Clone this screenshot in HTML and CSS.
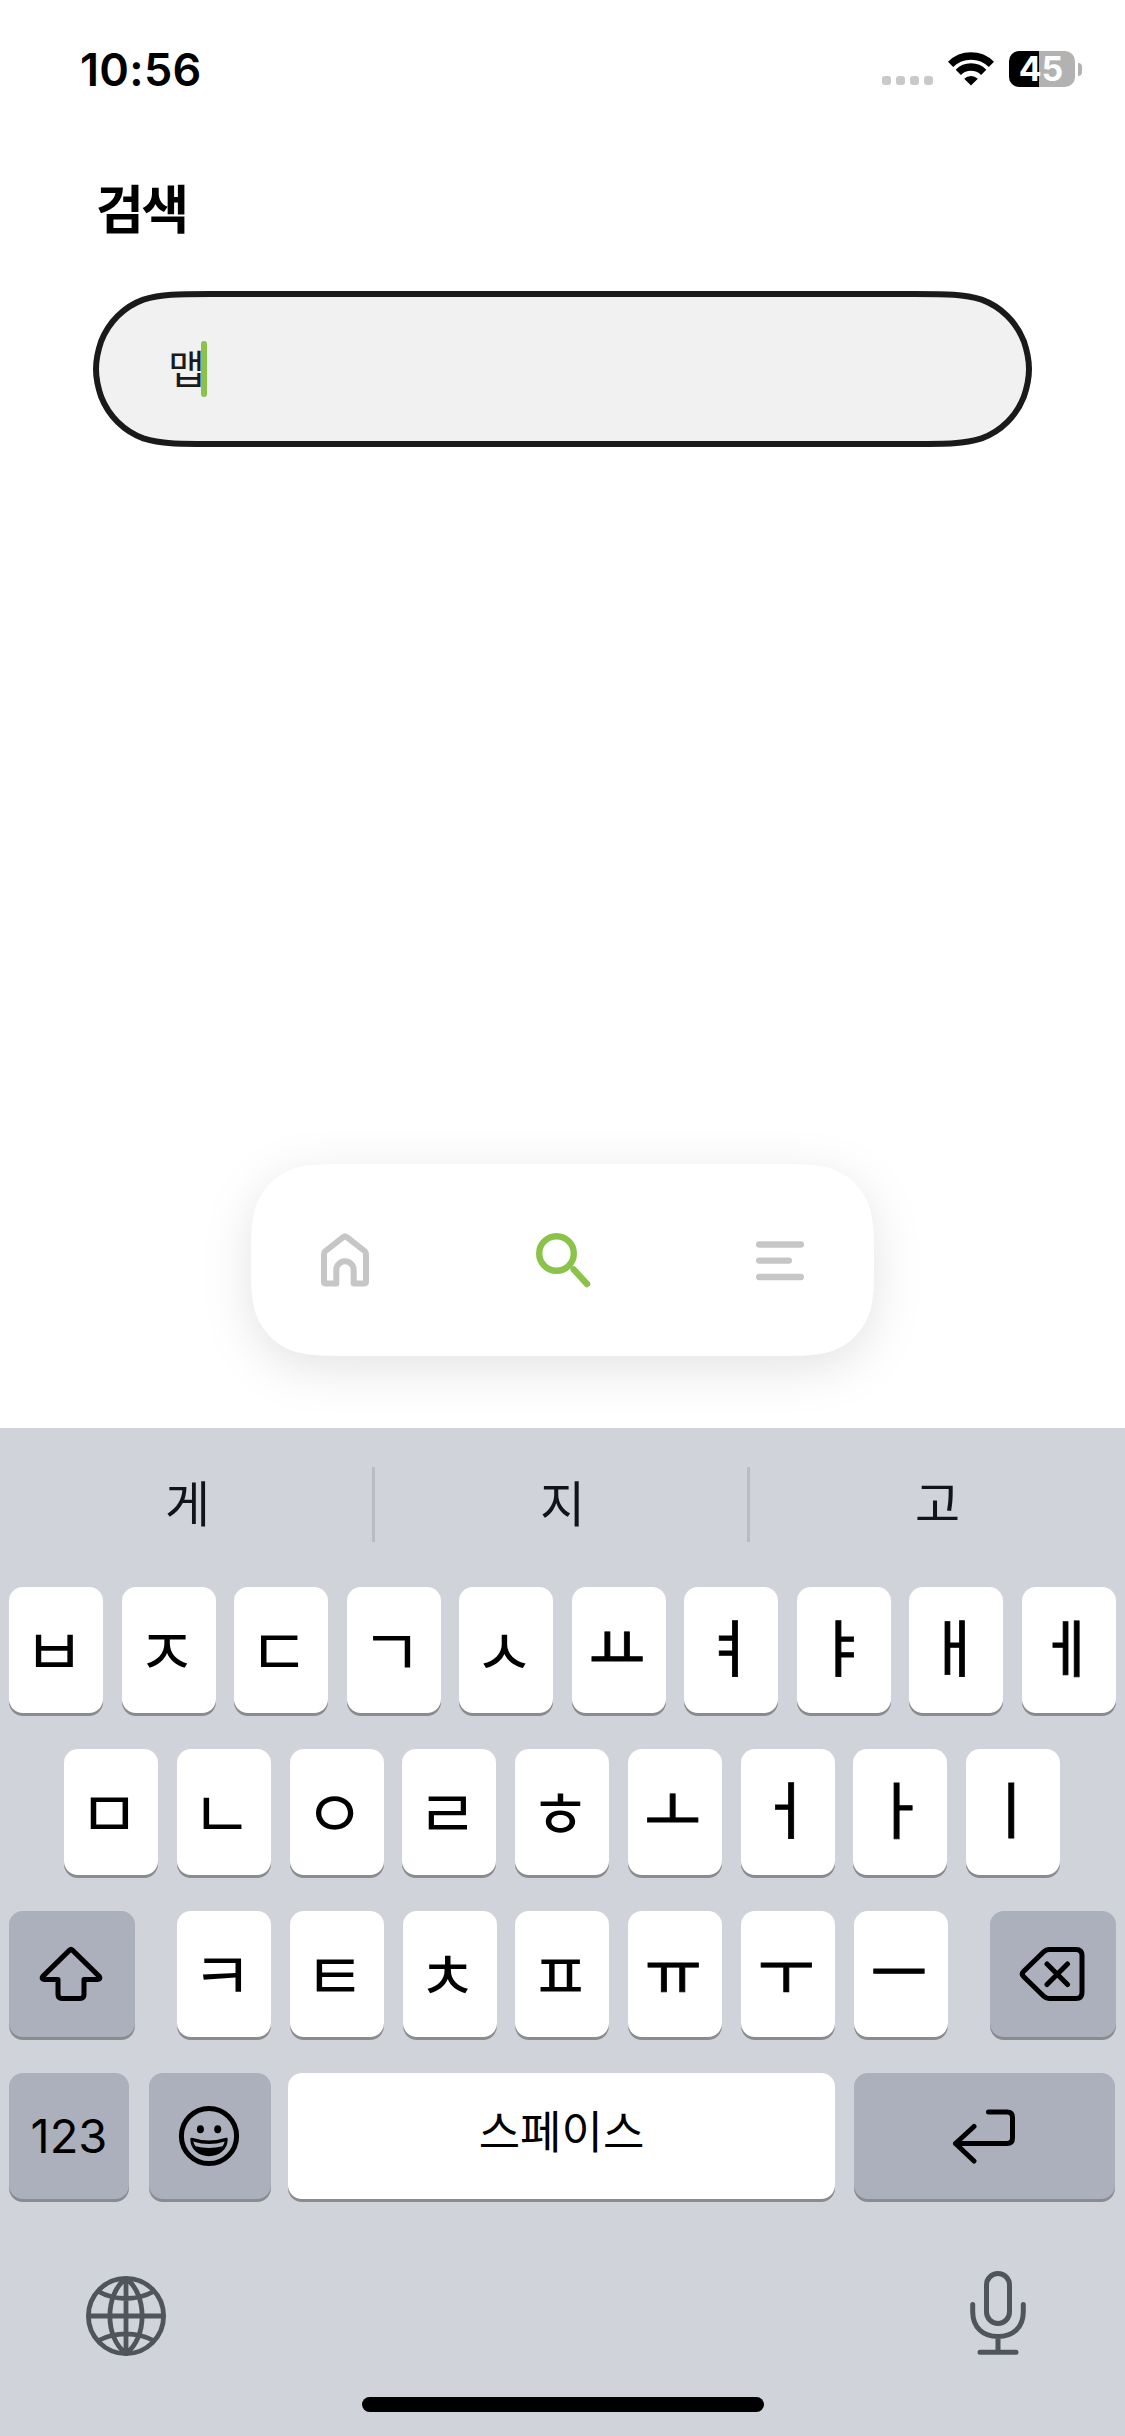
FILE: index.html
```html
<!DOCTYPE html>
<html lang="ko">
<head>
<meta charset="utf-8">
<title>검색</title>
<link rel="stylesheet" href="styles.css">
</head>
<body>
<header class="status">
  <span class="clock">10:56</span>
  <div class="signals">
    <div class="cell"><i></i><i></i><i></i><i></i></div>
    <svg class="wifi" width="46" height="34" viewBox="0 0 46 34">
      <g fill="none" stroke="#000" stroke-width="7.4">
        <path d="M2.6 12.4A29 29 0 0 1 43.4 12.4"/>
        <path d="M10.3 20.3A18 18 0 0 1 35.7 20.3"/>
      </g>
      <path d="M23 33.6L16.2 26.8A9.6 9.6 0 0 1 29.8 26.8Z"/>
    </svg>
    <div class="battery"><span class="level">45</span><i class="nub"></i></div>
  </div>
</header>

<main class="page">
  <h1 class="title">검색</h1>
  <div class="field">
    <svg class="field-shape" width="939" height="156" viewBox="0 0 939 156">
      <path d="M117.65 3H821.35C854.36 3 870.87 3 888.64 8.62C908.04 15.68 923.32 30.96 930.9 50.36C934 59.5 936 67 936 78C936 89 934 96.5 930.9 105.64C923.32 125.04 908.04 140.32 888.64 147.38C870.87 153 854.36 153 821.35 153H117.65C84.64 153 68.13 153 50.36 147.38C30.96 140.32 15.68 125.04 8.1 105.64C5 96.5 3 89 3 78C3 67 5 59.5 8.1 50.36C15.68 30.96 30.96 15.68 50.36 8.62C68.13 3 84.64 3 117.65 3Z" fill="#f1f1f1" stroke="#1a1a1a" stroke-width="6"/>
    </svg>
    <span class="query">맵</span><i class="caret"></i>
  </div>
</main>

<div class="dock">
  <nav class="tabs">
    <svg width="50" height="56" viewBox="0 0 50 56" fill="none" stroke="#c6c6c6" stroke-width="6" stroke-linejoin="round"><path d="M23.2 5.2Q25 3.7 26.8 5.2L44.5 19Q46 20.3 46 22V49.5Q46 51.5 44 51.5H33.7V38A8.7 8.7 0 0 0 16.3 38V51.5H6Q4 51.5 4 49.5V22Q4 20.3 5.5 19Z"/></svg>
    <svg width="56" height="56" viewBox="0 0 56 56" fill="none" stroke="#8bc34a" stroke-width="6.4"><circle cx="21.5" cy="21.5" r="17.3"/><path d="M38.6 37.3L52 52" stroke-linecap="round"/></svg>
    <svg width="50" height="56" viewBox="0 0 50 56" fill="none" stroke="#c6c6c6" stroke-width="6.4" stroke-linecap="round"><path d="M4.2 12.5H45.8M4.2 28.6H33.8M4.2 45H45.8"/></svg>
  </nav>
</div>

<section class="keyboard">
  <div class="suggestions"><span>게</span><span>지</span><span>고</span></div>
  <div class="keys">
    <div class="row">
      <b class="key cons">ㅂ</b><b class="key cons">ㅈ</b><b class="key cons">ㄷ</b><b class="key cons">ㄱ</b><b class="key cons">ㅅ</b><b class="key">ㅛ</b><b class="key">ㅕ</b><b class="key">ㅑ</b><b class="key">ㅐ</b><b class="key">ㅔ</b>
    </div>
    <div class="row inset">
      <b class="key cons">ㅁ</b><b class="key cons">ㄴ</b><b class="key cons">ㅇ</b><b class="key cons">ㄹ</b><b class="key cons">ㅎ</b><b class="key">ㅗ</b><b class="key">ㅓ</b><b class="key">ㅏ</b><b class="key">ㅣ</b>
    </div>
    <div class="row">
      <b class="key dark side"><svg width="64" height="56" viewBox="0 0 64 56" fill="none" stroke="#000" stroke-width="5" stroke-linejoin="round"><path d="M33.4 4.1L60.2 30.4Q62 33.2 58.6 33.5H45V48.5Q45 52.5 41 52.5H23Q19 52.5 19 48.5V33.5H5.4Q2 33.2 3.8 30.4L30.6 4.1Q32 2.7 33.4 4.1Z"/></svg></b>
      <div class="letters">
        <b class="key cons">ㅋ</b><b class="key cons">ㅌ</b><b class="key cons">ㅊ</b><b class="key cons">ㅍ</b><b class="key">ㅠ</b><b class="key">ㅜ</b><b class="key">ㅡ</b>
      </div>
      <b class="key dark side"><svg width="66" height="56" viewBox="0 0 66 56" fill="none" stroke="#000" stroke-width="5" stroke-linejoin="round" stroke-linecap="round"><path d="M30 3.5H57Q63 3.5 63 9.5V46.5Q63 52.5 57 52.5H30Q27 52.5 24.5 50L4.5 30.5Q2 28 4.5 25.5L24.5 6Q27 3.5 30 3.5ZM28 18L48.5 38.5M48.5 18L28 38.5"/></svg></b>
    </div>
    <div class="row bottom">
      <b class="key dark num">123</b>
      <b class="key dark emoji"><svg width="62" height="62" viewBox="0 0 62 62"><circle cx="31" cy="31" r="27.6" fill="none" stroke="#000" stroke-width="5"/><ellipse cx="22.4" cy="24.3" rx="3.5" ry="4"/><ellipse cx="39.7" cy="24.3" rx="3.5" ry="4"/><path d="M13.5 34Q31 39.5 48.5 34C48.5 44.5 40 50 31 50S13.5 44.5 13.5 34Z" stroke="#000" stroke-width="2.4" stroke-linejoin="round"/><path d="M15.3 36.5Q31 41.5 46.7 36.5Q46 39.5 44.5 41.3Q31 44.5 17.5 41.3Q16 39.5 15.3 36.5Z" fill="#acb0bc"/></svg></b>
      <b class="key space">스페이스</b>
      <b class="key dark enter"><svg width="64" height="56" viewBox="0 0 64 56" fill="none" stroke="#000" stroke-width="5" stroke-linejoin="round" stroke-linecap="round"><path d="M36.5 4H55Q60.5 4 60.5 9.5V30Q60.5 35.5 55 35.5H3.5M22 18.5L3.5 35.5L22 53"/></svg></b>
    </div>
  </div>
  <div class="tools">
    <svg width="80" height="80" viewBox="0 0 80 80" fill="none" stroke="#50555c" stroke-width="4.8"><circle cx="40" cy="40" r="37.6"/><path d="M40 2V78M2 40H78M40 2.5C18.5 18 18.5 62 40 77.5C61.5 62 61.5 18 40 2.5M12.5 15.5Q25 22.5 40 22.5T67.5 15.5M12.5 64.5Q25 57.8 40 57.8T67.5 64.5"/></svg>
    <svg width="56" height="84" viewBox="0 0 56 84" fill="none" stroke="#50555c" stroke-width="5" stroke-linecap="round"><rect x="16.5" y="2.5" width="23" height="50" rx="11.5"/><path d="M2.7 33.5V40.5C2.7 56.5 13 65.5 28 65.5S53.3 56.5 53.3 40.5V33.5M28 65.5V81M10 81.3H46"/></svg>
  </div>
  <div class="home-bar"></div>
</section>
</body>
</html>
```
FILE: styles.css
```css
* { box-sizing: border-box; }

body {
  margin: 0;
  width: 1125px;
  height: 2436px;
  display: flex;
  flex-direction: column;
  background: #fff;
  color: #000;
  font-family: Inter, "Noto Sans CJK KR", sans-serif;
  overflow: hidden;
}

svg { display: block; flex: none; }

.status {
  height: 140px;
  padding: 51px 43px 0 80px;
  display: flex;
  justify-content: space-between;
  align-items: flex-start;
}
.clock {
  padding-top: 1px;
  font-size: 45px;
  line-height: 36px;
  font-weight: 600;
  letter-spacing: 0.3px;
}
.signals { display: flex; height: 36px; }
.cell {
  display: flex;
  gap: 5px;
  align-items: flex-end;
  padding-bottom: 2px;
  margin-right: 15px;
}
.cell i {
  width: 9px;
  height: 9px;
  border-radius: 3px;
  background: #c9c9c9;
}
.wifi { margin: 1px 15px 0 0; }
.battery { display: flex; align-items: center; gap: 3px; }
.level {
  width: 66px;
  height: 36px;
  padding-right: 2px;
  border-radius: 10px;
  background: linear-gradient(90deg, #000 30px, #b2b2b2 30px);
  color: #fff;
  font-size: 34px;
  line-height: 36px;
  font-weight: 650;
  text-align: center;
}
.nub {
  width: 4px;
  height: 13px;
  border-radius: 0 4px 4px 0;
  background: #b2b2b2;
}

.page { height: 1024px; padding: 0 93px; }
.title {
  margin: 41px 0 0;
  padding-left: 3px;
  height: 110px;
  font-size: 52px;
  line-height: 60px;
  font-weight: 700;
  letter-spacing: -2.5px;
}
.field {
  position: relative;
  height: 156px;
  padding-left: 75px;
  display: flex;
  align-items: center;
}
.field-shape { position: absolute; inset: 0; }
.query {
  position: relative;
  width: 33px;
  padding-top: 2px;
  font-size: 40px;
  line-height: 56px;
  color: #1a1a1a;
  white-space: nowrap;
}
.caret {
  position: relative;
  width: 6px;
  height: 56px;
  border-radius: 3px;
  background: #8bc34a;
}

.dock {
  height: 264px;
  display: flex;
  justify-content: center;
  align-items: flex-start;
  filter: drop-shadow(0 12px 24px rgba(0, 0, 0, 0.11));
}
.tabs {
  width: 623px;
  height: 192px;
  padding: 0 69px;
  display: flex;
  justify-content: space-between;
  align-items: center;
  background: #fff;
  clip-path: path("M100.9 0H522.1C551.2 0 565.7 0 581.3 4.94C598.4 11.2 611.8 24.6 618.06 41.7C623 57.3 623 71.8 623 96C623 120.2 623 134.7 618.06 150.3C611.8 167.4 598.4 180.8 581.3 187.06C565.7 192 551.2 192 522.1 192H100.9C71.8 192 57.3 192 41.7 187.06C24.6 180.8 11.2 167.4 4.94 150.3C0 134.7 0 120.2 0 96C0 71.8 0 57.3 4.94 41.7C11.2 24.6 24.6 11.2 41.7 4.94C57.3 0 71.8 0 100.9 0Z");
}

.keyboard {
  position: relative;
  height: 1008px;
  background: #d0d3da;
}
.suggestions {
  height: 159px;
  padding-top: 39px;
  display: grid;
  grid-template-columns: repeat(3, 375px);
}
.suggestions span {
  height: 75px;
  font-size: 49px;
  line-height: 76px;
  text-align: center;
  color: #111418;
}
.suggestions span + span { box-shadow: -3px 0 0 #babcc1; }

.keys {
  padding: 0 9px;
  display: grid;
  gap: 36px;
}
.row {
  height: 126px;
  display: flex;
  justify-content: space-between;
}
.inset { padding: 0 56px 0 55px; }
.letters {
  width: 771px;
  display: flex;
  justify-content: space-between;
}
.key {
  width: 94px;
  height: 126px;
  padding-right: 4px;
  border-radius: 14px;
  background: #fff;
  box-shadow: 0 3px 0 #898b8f;
  display: flex;
  align-items: center;
  justify-content: center;
  font-size: 62px;
  font-weight: 400;
  line-height: 126px;
  -webkit-text-stroke: 0.8px #000;
}
.cons {
  padding-top: 3px;
  font-size: 66px;
  -webkit-text-stroke: 0;
}
.dark {
  padding-right: 2px;
  background: #abb0bc;
}
.side { width: 126px; }
.num,
.space {
  padding-right: 0;
  -webkit-text-stroke: 0;
}
.num {
  width: 120px;
  font-size: 47px;
}
.bottom { justify-content: flex-start; }
.emoji {
  width: 122px;
  margin: 0 17px 0 20px;
}
.space {
  width: 547px;
  padding-bottom: 7px;
  font-size: 45px;
}
.enter {
  width: 261px;
  margin-left: 19px;
}

.tools {
  display: flex;
  justify-content: space-between;
  padding: 72px 99px 0 86px;
}
.tools svg:first-child { margin-top: 5px; }
.home-bar {
  width: 402px;
  height: 15px;
  margin: 41px auto 0;
  border-radius: 8px;
  background: #000;
}
```
